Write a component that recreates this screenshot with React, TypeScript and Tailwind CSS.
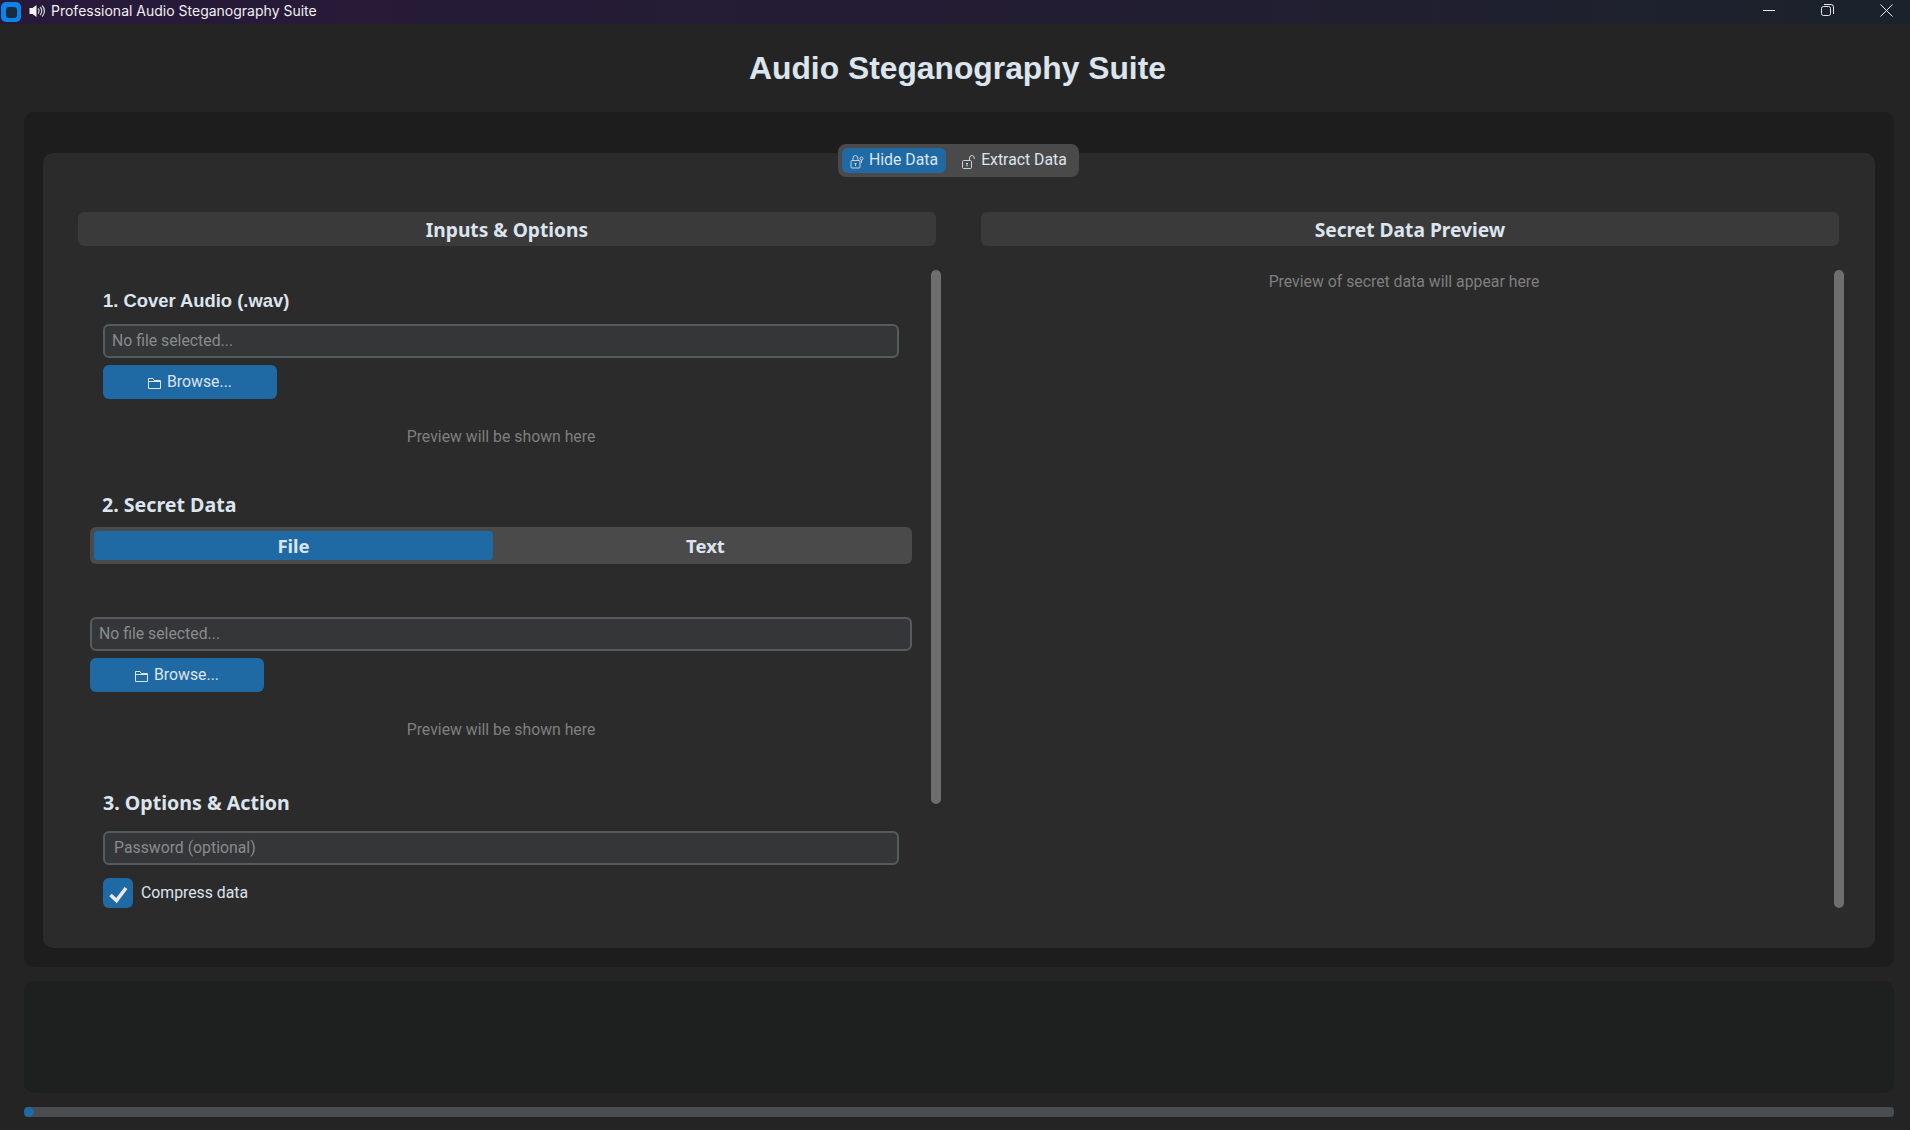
function FolderIcon() {
  return (
    <svg width="13" height="13" viewBox="0 0 13 13" fill="none" stroke="#dce4ee" strokeWidth="1" className="mt-[3px] mr-[6px] shrink-0">
      <path d="M0.5 11.5V1.5H5L6.2 3.5H12.5V11.5Z" />
      <path d="M0.5 4.5H12.5" />
    </svg>
  )
}

function LockKeyIcon() {
  return (
    <svg width="14" height="14" viewBox="0 0 14 14" fill="none" stroke="#c8d2dc" strokeWidth="1" className="mt-[3px] mr-[5px] shrink-0">
      <rect x="1" y="5.5" width="9" height="7.5" rx="1" />
      <path d="M3 5.5V3a2.4 2.4 0 0 1 4.8 0v2.5" />
      <circle cx="11.5" cy="3.5" r="1.5" />
      <path d="M11.5 5v3M5.5 11V8M4.5 9l1-1 1 1" />
    </svg>
  )
}

function UnlockIcon() {
  return (
    <svg width="14" height="14" viewBox="0 0 14 14" fill="none" stroke="#c8d2dc" strokeWidth="1" className="mt-[3px] mr-[5px] shrink-0">
      <rect x="0.5" y="5.5" width="9" height="8" rx="1" />
      <path d="M7.5 5.5V3a2.4 2.4 0 0 1 4.8 0v1" />
      <path d="M5 11.5V8M4 9l1-1 1 1" />
    </svg>
  )
}

function SpeakerIcon() {
  return (
    <svg width="16" height="14" viewBox="0 0 16 14" className="shrink-0">
      <path d="M0.5 4H3.5L7.5 1V13L3.5 10H0.5Z" fill="#f2f2f2" />
      <path d="M9 4.5a3.5 3.5 0 0 1 0 5M11 3a5.5 5.5 0 0 1 0 8M13 1.5a7.5 7.5 0 0 1 0 11" fill="none" stroke="#d0d0d0" strokeWidth="1.2" />
    </svg>
  )
}

function Heading({ children, className }: { children: string; className?: string }) {
  return <div className={`font-['Noto_Sans',sans-serif] text-[19.6px] leading-[24px] font-bold text-[#dce4ee] ${className ?? ""}`}>{children}</div>
}

function FileField({ placeholder }: { placeholder: string }) {
  return (
    <div className="h-[34px] rounded-[6px] border-2 border-[#565b5e] bg-[#343638] pl-[7px] text-[15.8px] leading-[30px] text-[#888c8d]">
      {placeholder}
    </div>
  )
}

function BrowseButton() {
  return (
    <div className="mt-[7px] flex h-[34px] w-[174px] items-center justify-center rounded-[6px] bg-[#1f6aa5] text-[15.8px] text-[#dce4ee]">
      <FolderIcon />
      <span className="-mt-[1px]">Browse...</span>
    </div>
  )
}

function PreviewHint() {
  return <div className="text-center text-[15.8px] leading-[20px] text-[#7f7f7f]">Preview will be shown here</div>
}

function PanelHeader({ children }: { children: string }) {
  return (
    <div className="flex h-[34px] w-[858px] items-center justify-center rounded-[6px] bg-[#3a3a3a] pt-[3px] font-['Noto_Sans',sans-serif] text-[19.2px] font-bold text-[#dce4ee]">
      {children}
    </div>
  )
}

function Scrollbar({ height }: { height: string }) {
  return <div className={`w-[10px] shrink-0 rounded-full bg-[#6e6e6e] ${height}`} />
}

export default function App() {
  return (
    <div className="flex h-screen w-full flex-col overflow-hidden bg-[#242424] font-['Roboto',sans-serif]">
      <div className="flex h-[24px] shrink-0 items-center bg-gradient-to-r from-[#28193a] via-[#231c33] to-[#1b222b] pb-[4px]">
        <div className="ml-[1px] mt-[4px] flex h-[20px] w-[20px] items-center justify-center rounded-[5px] bg-[#0a84e8]">
          <div className="h-[11px] w-[11px] rounded-[3px] bg-[#1b2a3c]" />
        </div>
        <div className="ml-[8px] mt-[2px]">
          <SpeakerIcon />
        </div>
        <span className="ml-[6px] font-['Inter',sans-serif] text-[14px] text-[#f0f0f0]">Professional Audio Steganography Suite</span>
        <div className="ml-auto flex items-center">
          <div className="mr-[46px] h-[1px] w-[12px] bg-[#e8e8e8]" />
          <svg width="13" height="13" viewBox="0 0 13 13" fill="none" stroke="#e8e8e8" strokeWidth="1" className="mr-[46px]">
            <rect x="0.5" y="2.5" width="9" height="9" rx="2" />
            <path d="M3 0.5H10a2.5 2.5 0 0 1 2.5 2.5V10" />
          </svg>
          <svg width="13" height="13" viewBox="0 0 13 13" fill="none" stroke="#e8e8e8" strokeWidth="1" className="mr-[17px]">
            <path d="M0.5 0.5L12.5 12.5M12.5 0.5L0.5 12.5" />
          </svg>
        </div>
      </div>

      <div className="flex h-[88px] shrink-0 items-center justify-center pl-[5px] pt-[2px] font-['Liberation_Sans',sans-serif] text-[31.8px] font-bold text-[#dce4ee]">
        Audio Steganography Suite
      </div>

      <div className="ml-[24px] mr-[16px] h-[855px] shrink-0 rounded-[10px] bg-[#1d1d1d] px-[19px] pt-[32px]">
        <div className="relative z-10 flex justify-center pr-[1px]">
          <div className="flex h-[33px] w-[241px] items-center rounded-[8px] bg-[#4a4a4a] px-[4px] text-[15.8px] text-[#dce4ee]">
            <div className="flex h-[25px] w-[104px] items-center justify-center rounded-[6px] bg-[#1f6aa5]">
              <LockKeyIcon />
              <span className="-mt-[1px]">Hide Data</span>
            </div>
            <div className="flex h-[25px] flex-1 items-center justify-center pl-[8px]">
              <UnlockIcon />
              <span className="-mt-[1px]">Extract Data</span>
            </div>
          </div>
        </div>

        <div className="-mt-[24px] flex h-[795px] gap-[40px] rounded-[10px] bg-[#2b2b2b] pt-[59px] pl-[35px]">
          <div className="w-[863px]">
            <PanelHeader>Inputs & Options</PanelHeader>
            <div className="mt-[24px] flex">
              <div className="w-[853px]">
                <div className="pl-[25px] pr-[32px]">
                  <div className="pt-[19px] font-['Liberation_Sans',sans-serif] text-[18.4px] leading-[24px] font-bold text-[#dce4ee]">1. Cover Audio (.wav)</div>
                  <div className="mt-[11px]">
                    <FileField placeholder="No file selected..." />
                  </div>
                  <BrowseButton />
                  <div className="mt-[28px]">
                    <PreviewHint />
                  </div>
                </div>
                <div className="pl-[12px] pr-[19px]">
                  <Heading className="mt-[46px] pl-[12px]">2. Secret Data</Heading>
                  <div className="mt-[10px] flex h-[37px] items-center rounded-[6px] bg-[#4a4a4a] px-[4px] font-['Noto_Sans',sans-serif] text-[18.5px] font-bold text-[#dce4ee]">
                    <div className="flex h-[29px] w-[399px] items-center justify-center rounded-[4px] bg-[#1f6aa5]">File</div>
                    <div className="flex h-[29px] flex-1 items-center justify-center pl-[10px]">Text</div>
                  </div>
                  <div className="mt-[53px]">
                    <FileField placeholder="No file selected..." />
                  </div>
                  <BrowseButton />
                  <div className="mt-[28px]">
                    <PreviewHint />
                  </div>
                </div>
                <div className="pl-[25px] pr-[32px]">
                  <Heading className="mt-[51px]">3. Options & Action</Heading>
                  <div className="mt-[16px] h-[34px] rounded-[6px] border-2 border-[#565b5e] bg-[#343638] pl-[9px] text-[15.8px] leading-[30px] text-[#888c8d]">
                    Password (optional)
                  </div>
                  <div className="mt-[13px] flex items-center">
                    <div className="flex h-[30px] w-[30px] items-center justify-center rounded-[6px] bg-[#1f6aa5]">
                      <svg width="30" height="30" viewBox="0 0 30 30" fill="none" stroke="#e8e8e8" strokeWidth="3.6">
                        <path d="M7.5 17L13.5 22.5L23 10" />
                      </svg>
                    </div>
                    <span className="ml-[8px] text-[15.8px] text-[#dce4ee]">Compress data</span>
                  </div>
                </div>
              </div>
              <Scrollbar height="h-[534px]" />
            </div>
          </div>

          <div className="w-[863px]">
            <PanelHeader>Secret Data Preview</PanelHeader>
            <div className="mt-[24px] flex">
              <div className="w-[853px] pr-[7px] pt-[2px] text-center text-[15.8px] leading-[20px] text-[#7f7f7f]">
                Preview of secret data will appear here
              </div>
              <Scrollbar height="h-[638px]" />
            </div>
          </div>
        </div>
      </div>

      <div className="ml-[24px] mr-[16px] mt-[14px] h-[112px] shrink-0 rounded-[10px] bg-[#1e201f]" />

      <div className="ml-[24px] mr-[16px] mt-[14px] h-[10px] shrink-0 rounded-[4px] bg-[#4a4d50]">
        <div className="h-[10px] w-[10px] rounded-full bg-[#1f6aa5]" />
      </div>
    </div>
  )
}
